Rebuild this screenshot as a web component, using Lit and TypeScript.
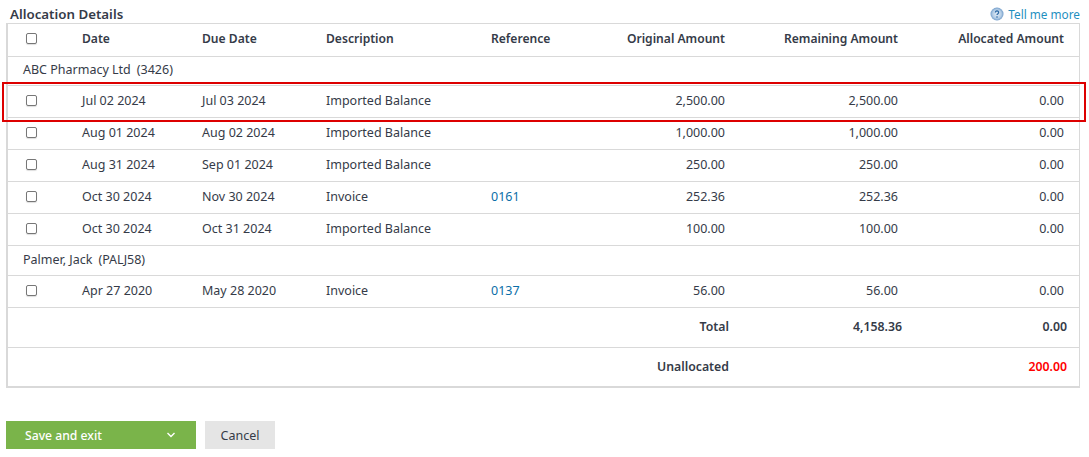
import { LitElement, html, css } from "lit";
import { customElement } from "lit/decorators.js";

type Row = { d: string; due: string; desc: string; ref?: string; o: string; r: string; a: string };
const g1: Row[] = [
  { d: "Jul 02 2024", due: "Jul 03 2024", desc: "Imported Balance", o: "2,500.00", r: "2,500.00", a: "0.00" },
  { d: "Aug 01 2024", due: "Aug 02 2024", desc: "Imported Balance", o: "1,000.00", r: "1,000.00", a: "0.00" },
  { d: "Aug 31 2024", due: "Sep 01 2024", desc: "Imported Balance", o: "250.00", r: "250.00", a: "0.00" },
  { d: "Oct 30 2024", due: "Nov 30 2024", desc: "Invoice", ref: "0161", o: "252.36", r: "252.36", a: "0.00" },
  { d: "Oct 30 2024", due: "Oct 31 2024", desc: "Imported Balance", o: "100.00", r: "100.00", a: "0.00" },
];
const g2: Row[] = [
  { d: "Apr 27 2020", due: "May 28 2020", desc: "Invoice", ref: "0137", o: "56.00", r: "56.00", a: "0.00" },
];

@customElement("app-root")
export class AppRoot extends LitElement {
  static styles = css`
    :host { display: block; width: 1089px; height: 457px; position: relative; font-family: "Noto Sans", "Open Sans", sans-serif; font-size: 12.5px; color: #353b48; background: #fff; overflow: hidden; }
    .top { display: flex; justify-content: space-between; align-items: flex-end; height: 23px; padding: 0 9px 0 10px; }
    h2 { margin: 0; font-size: 13.3px; font-weight: 600; line-height: 18px; color: #353b48; }
    .more { display: flex; align-items: center; gap: 4px; color: #1f8fbf; line-height: 18px; font-size: 11.8px; }
    .more svg { display: block; }
    .table { margin: 0 9px 0 6px; border: 1px solid #d9d9d9; border-bottom-width: 2px; border-left-width: 2px; }
    .row { display: grid; grid-template-columns: 74px 120px 124px 165px 80px 154px 173px 1fr; align-items: center; height: 32px; box-sizing: border-box; padding-bottom: 2px; border-bottom: 1px solid #d9d9d9; }
    .head { height: 33px; font-size: 12.1px; font-weight: 600; padding-bottom: 3px; }
    .num { text-align: right; }
    .last { padding-right: 15px; }
    .cb { appearance: none; margin: 0 0 0 18px; width: 11px; height: 11px; border: 1px solid #777; border-radius: 2px; background: #fff; display: block; box-sizing: border-box; box-shadow: 0 1px 1px #ddd; }
    .group { height: 29px; box-sizing: border-box; display: flex; align-items: center; padding: 0 0 3px 15px; border-bottom: 1px solid #d9d9d9; }
    .group.second { height: 30px; padding-bottom: 2px; }
    .group span { margin-left: 6px; }
    .link { color: #0b6ea8; }
    .sum { display: grid; grid-template-columns: 721px 173px 1fr; align-items: center; height: 40px; box-sizing: border-box; padding-bottom: 2px; border-bottom: 1px solid #d9d9d9; font-size: 12.3px; font-weight: 600; }
    .sum:last-child { border-bottom: 0; height: 38px; padding-bottom: 1px; }
    .sum .last { padding-right: 12px; }
    .red { color: #f00; }
    .actions { display: flex; gap: 9px; margin: 33px 0 0 6px; }
    .save { width: 190px; height: 28px; box-sizing: border-box; background: #7ab44a; color: #fff; border: 0; padding: 0 20px 0 19px; display: flex; align-items: center; justify-content: space-between; font: inherit; font-size: 12.2px; font-weight: 500; }
    .cancel { width: 70px; height: 28px; background: #e5e5e5; border: 0; font: inherit; color: #353b48; padding: 0; }
    .mark { position: absolute; left: 2px; top: 82px; width: 1084px; height: 40px; box-sizing: border-box; border: 2px solid #dd0000; pointer-events: none; }
  `;

  private row(r: Row) {
    return html`<div class="row">
      <div><input class="cb" type="checkbox" /></div>
      <div>${r.d}</div><div>${r.due}</div><div>${r.desc}</div>
      <div class="link">${r.ref ?? ""}</div>
      <div class="num">${r.o}</div><div class="num">${r.r}</div><div class="num last">${r.a}</div>
    </div>`;
  }

  render() {
    return html`
      <div class="top">
        <h2>Allocation Details</h2>
        <div class="more">
          <svg width="14" height="14" viewBox="0 0 14 14"><defs><radialGradient id="h" cx=".5" cy=".5" r=".55"><stop offset="0" stop-color="#e4edf6"/><stop offset=".6" stop-color="#b4cde6"/><stop offset="1" stop-color="#5f8fc2"/></radialGradient></defs><circle cx="7" cy="7" r="6.5" fill="url(#h)"/><path d="M5.4 5.5a1.6 1.600 0 1 1 2.400 1.400c-.6.3-.8.6-.8 1.100" fill="none" stroke="#2f6aa5" stroke-width="1.200"/><circle cx="7" cy="10" r=".8" fill="#2f6aa5"/></svg>
          Tell me more
        </div>
      </div>
      <div class="table">
        <div class="row head">
          <div><input class="cb" type="checkbox" /></div>
          <div>Date</div><div>Due Date</div><div>Description</div><div>Reference</div>
          <div class="num">Original Amount</div><div class="num">Remaining Amount</div><div class="num last">Allocated Amount</div>
        </div>
        <div class="group">ABC Pharmacy Ltd <span>(3426)</span></div>
        ${g1.map((r) => this.row(r))}
        <div class="group second">Palmer, Jack <span>(PALJ58)</span></div>
        ${g2.map((r) => this.row(r))}
        <div class="sum"><div class="num">Total</div><div class="num">4,158.36</div><div class="num last">0.00</div></div>
        <div class="sum"><div class="num">Unallocated</div><div></div><div class="num last red">200.00</div></div>
      </div>
      <div class="actions">
        <button class="save">Save and exit
          <svg width="10" height="6" viewBox="0 0 10 6"><path d="M1.500 1l3.500 3.500L8.500 1" fill="none" stroke="#fff" stroke-width="1.400"/></svg>
        </button>
        <button class="cancel">Cancel</button>
      </div>
      <div class="mark"></div>
    `;
  }
}
